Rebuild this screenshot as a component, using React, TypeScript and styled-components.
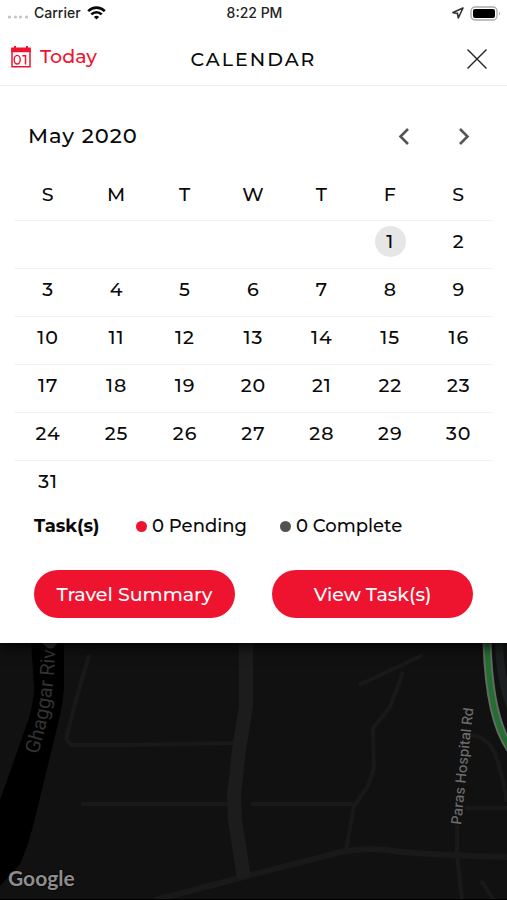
import React from "react";
import styled, { createGlobalStyle } from "styled-components";

const RED = "#ee1430";

const GlobalStyle = createGlobalStyle`
  * { box-sizing: border-box; }
  body {
    margin: 0;
    background: #111;
    font-family: Montserrat, Inter, "Open Sans", sans-serif;
    color: #0a0a0a;
  }
  button { font: inherit; letter-spacing: inherit; cursor: pointer; border: 0; }
`;

const Screen = styled.div`
  display: flex;
  flex-direction: column;
  min-height: 100vh;
`;

const Sheet = styled.main`
  position: relative;
  z-index: 1;
  background: #fff;
  padding-bottom: 25px;
  box-shadow: 0 2px 14px #000;
`;

const StatusBar = styled.div`
  display: grid;
  grid-template-columns: 1fr auto 1fr;
  align-items: center;
  height: 26px;
  padding: 0 6px 0 8px;
  font-family: Inter, sans-serif;
  font-size: 14px;
  font-weight: 500;
  line-height: 20px;
  color: #222;
`;

const StatusGroup = styled.div<{ $end?: boolean }>`
  display: flex;
  align-items: center;
  gap: 6px;
  justify-content: ${(p) => (p.$end ? "flex-end" : "flex-start")};
`;

const Header = styled.header`
  display: grid;
  grid-template-columns: 1fr auto 1fr;
  align-items: center;
  height: 60px;
  padding: 0 16px 0 10px;
  border-bottom: 1px solid #ededed;
`;

const TodayButton = styled.button`
  display: flex;
  align-items: center;
  gap: 8px;
  justify-self: start;
  padding: 2px 0 0;
  background: none;
  color: ${RED};
  font-size: 19px;
  font-weight: 500;
  line-height: 24px;
`;

const Title = styled.h1`
  margin: 0;
  padding: 8px 0 0 6px;
  font-size: 19px;
  font-weight: 500;
  line-height: 24px;
  letter-spacing: 2px;
`;

const IconButton = styled.button`
  display: grid;
  place-items: center;
  justify-self: end;
  width: 28px;
  height: 28px;
  padding: 0;
  background: none;
  color: #555;
`;

const CloseButton = styled(IconButton)`
  margin-top: 6px;
  color: #222;
`;

const MonthBar = styled.div`
  display: flex;
  align-items: center;
  justify-content: space-between;
  height: 100px;
  padding: 0 29px 0 28px;
`;

const MonthName = styled.h2`
  margin: 0;
  font-size: 21px;
  font-weight: 500;
  line-height: 28px;
  letter-spacing: 1px;
`;

const MonthNav = styled.div`
  display: flex;
  gap: 32px;
`;

const CalendarWrap = styled.div`
  margin-top: -18px;
  padding: 0 14px;
`;

const Calendar = styled.table`
  width: 100%;
  table-layout: fixed;
  border-collapse: collapse;
  font-size: 19px;
  line-height: 24px;
  letter-spacing: 1px;
`;

const Weekday = styled.th`
  height: 52px;
  padding: 3px 0 0;
  font-weight: 500;
`;

const Week = styled.tr`
  border-top: 1px solid #f3f3f3;
`;

const DayCell = styled.td`
  height: 48px;
  padding: 0 0 5px;
  text-align: center;
  vertical-align: middle;
`;

const Day = styled.button<{ $selected: boolean }>`
  width: 31px;
  height: 31px;
  padding: 0;
  border-radius: 50%;
  background: ${(p) => (p.$selected ? "#e6e6e6" : "transparent")};
  color: inherit;
  font-weight: 500;
`;

const TaskRow = styled.section`
  display: flex;
  align-items: center;
  padding: 4px 34px 0;
  font-size: 18px;
  line-height: 28px;
`;

const TaskLabel = styled.strong`
  flex: 0 0 102px;
  font-weight: 700;
`;

const TaskCount = styled.span`
  display: flex;
  align-items: center;
  gap: 5px;
  min-width: 112px;
  margin-right: 32px;
  font-weight: 500;
  &:last-child { margin-right: 0; }
`;

const Dot = styled.i<{ $color: string }>`
  width: 11px;
  height: 11px;
  border-radius: 50%;
  background: ${(p) => p.$color};
`;

const Actions = styled.div`
  display: grid;
  grid-template-columns: 1fr 1fr;
  gap: 37px;
  padding: 30px 34px 0;
`;

const ActionButton = styled.button`
  height: 48px;
  padding: 0;
  border-radius: 24px;
  background: ${RED};
  color: #fff;
  font-size: 19px;
  font-weight: 500;
`;

const MapArea = styled.section`
  display: flex;
  flex: 1;
  min-height: 257px;
  background: #111;
`;

const MapSvg = styled.svg`
  display: block;
  flex: 1;
  min-width: 0;
  font-family: Roboto, sans-serif;
`;

const weekdays = ["S", "M", "T", "W", "T", "F", "S"];
const firstColumn = 5;
const weeks = Array.from({ length: 6 }, (_, w) =>
  Array.from({ length: 7 }, (_, d) => {
    const n = w * 7 + d - firstColumn + 1;
    return n >= 1 && n <= 31 ? n : null;
  })
);

const SignalDots = () => (
  <svg width="20" height="14" aria-hidden="true">
    {[2, 8, 13, 19].map((x) => (
      <circle key={x} cx={x - 0.5} cy="11" r="1.6" fill="#c4c4c4" />
    ))}
  </svg>
);

const WifiIcon = () => (
  <svg width="19" height="14" viewBox="0 0 19 14" fill="none" stroke="#080808" strokeWidth="2.6" aria-hidden="true">
    <path d="M1.2 5.2C6 .4 13 .4 17.8 5.2M4.3 8.4c3-2.9 7.4-2.9 10.4 0" />
    <path d="M9.5 13.6 6.9 10.9c1.5-1.4 3.7-1.4 5.2 0Z" fill="#080808" stroke="none" />
  </svg>
);

const LocationIcon = () => (
  <svg width="12" height="12" viewBox="0 0 12 12" fill="none" stroke="#333" strokeWidth="1.6" strokeLinejoin="round" aria-hidden="true">
    <path d="M11 1 1 5.6l4.5.8.8 4.6Z" />
  </svg>
);

const BatteryIcon = () => (
  <svg width="31" height="15" viewBox="0 0 31 15" aria-hidden="true">
    <rect x="1" y="1" width="26" height="13" rx="4" fill="#fff" stroke="#aaa" strokeWidth="1.3" />
    <rect x="3" y="3" width="22" height="9" rx="2" fill="#000" />
    <path d="M29 5.5q1.6 2 0 4Z" fill="#999" />
  </svg>
);

const TodayIcon = () => (
  <svg width="22" height="22" viewBox="0 0 22 22" aria-hidden="true">
    <path d="M2 2v18.8h18V2" fill="none" stroke={RED} strokeWidth="1.5" />
    <path d="M1.3 1.5H4V0h2v1.5h10V0h2v1.5h2.7v4.8H1.3Z" fill={RED} />
    <ellipse cx="7.2" cy="13.7" rx="3" ry="4.3" fill="none" stroke={RED} strokeWidth="1.4" />
    <path d="M12.3 9.7h3.2V18.5" fill="none" stroke={RED} strokeWidth="1.5" />
  </svg>
);

const CloseIcon = () => (
  <svg width="20" height="20" viewBox="0 0 20 20" stroke="currentColor" strokeWidth="1.4" aria-hidden="true">
    <path d="m.5.5 19 19m0-19-19 19" />
  </svg>
);

const Chevron = ({ right = false }: { right?: boolean }) => (
  <svg width="12" height="17" viewBox="0 0 12 17" fill="none" stroke="currentColor" strokeWidth="2.6" aria-hidden="true">
    <path d={right ? "m2 1 7.5 7.5L2 16" : "M10 1 2.5 8.5 10 16"} />
  </svg>
);

const MapDrawing = () => (
  <MapSvg viewBox="0 643 507 257" preserveAspectRatio="xMidYMin slice" role="img" aria-label="Map">
    <path d="M31 640h33v48q-1 16-6 36l-20 82q-9 39-18 58L0 886V800l28-79q6-19 6-34Z" fill="#000" />
    <g fill="none" stroke="#191919" strokeWidth="4" strokeLinejoin="round">
      <path d="M89 655 76 700 66 739l5 6h60l104-2" />
      <path d="M81 804h158M251 804h102" />
      <path d="m359 685 64-30M403 672l-13 35-17 21 1 40-6 18-14 20-8 45" />
      <path d="M457 825v30l5 45M465 808h42M471 735q17 2 24 19t12 48M481 881l13 19" />
      <path d="m155 900 96-25 90-23q30-6 60 0 50 4 106 5" strokeWidth="6" />
    </g>
    <path d="M246 640v66l-7 44-5 45 1 25 9 58" fill="none" stroke="#1c1c1c" strokeWidth="14" />
    <path d="M499 640q1 44 14 72" fill="none" stroke="#1b1f20" strokeWidth="8" />
    <path d="M487 640c1 42 6 86 25 111" fill="none" stroke="#606a62" strokeWidth="9" />
    <path d="M487 640c1 42 6 86 25 111" fill="none" stroke="#236e31" strokeWidth="5" />
    <circle cx="50" cy="638" r="9" fill="#343434" />
    <path id="riverLine" d="M38 755C50 714 55 688 56 625" fill="none" />
    <text fill="#323232" fontSize="20">
      <textPath href="#riverLine">Ghaggar River</textPath>
    </text>
    <text transform="translate(461 825) rotate(-84)" fill="#6c6c6c" fontSize="14" fontWeight="500" fontFamily="Inter, sans-serif">
      Paras Hospital Rd
    </text>
    <text x="8" y="886" fill="#8d8d8d" stroke="#080808" strokeWidth="2" paintOrder="stroke" fontSize="21" fontWeight="700" fontFamily="Lato, sans-serif">
      Google
    </text>
    <path d="M0 899h507v1H0Z" fill="#000" />
  </MapSvg>
);

export default function App() {
  return (
    <Screen>
      <GlobalStyle />
      <Sheet>
        <StatusBar>
          <StatusGroup>
            <SignalDots />
            <span>Carrier</span>
            <WifiIcon />
          </StatusGroup>
          <span>8:22 PM</span>
          <StatusGroup $end>
            <LocationIcon />
            <BatteryIcon />
          </StatusGroup>
        </StatusBar>
        <Header>
          <TodayButton>
            <TodayIcon />
            Today
          </TodayButton>
          <Title>CALENDAR</Title>
          <CloseButton aria-label="Close">
            <CloseIcon />
          </CloseButton>
        </Header>
        <MonthBar>
          <MonthName>May 2020</MonthName>
          <MonthNav>
            <IconButton aria-label="Previous month">
              <Chevron />
            </IconButton>
            <IconButton aria-label="Next month">
              <Chevron right />
            </IconButton>
          </MonthNav>
        </MonthBar>
        <CalendarWrap>
          <Calendar>
            <thead>
              <tr>
                {weekdays.map((d, i) => (
                  <Weekday key={i} scope="col">{d}</Weekday>
                ))}
              </tr>
            </thead>
            <tbody>
              {weeks.map((week, w) => (
                <Week key={w}>
                  {week.map((n, d) => (
                    <DayCell key={d}>{n && <Day $selected={n === 1}>{n}</Day>}</DayCell>
                  ))}
                </Week>
              ))}
            </tbody>
          </Calendar>
        </CalendarWrap>
        <TaskRow>
          <TaskLabel>Task(s)</TaskLabel>
          <TaskCount>
            <Dot $color={RED} />
            0 Pending
          </TaskCount>
          <TaskCount>
            <Dot $color="#525252" />
            0 Complete
          </TaskCount>
        </TaskRow>
        <Actions>
          <ActionButton>Travel Summary</ActionButton>
          <ActionButton>View Task(s)</ActionButton>
        </Actions>
      </Sheet>
      <MapArea>
        <MapDrawing />
      </MapArea>
    </Screen>
  );
}
